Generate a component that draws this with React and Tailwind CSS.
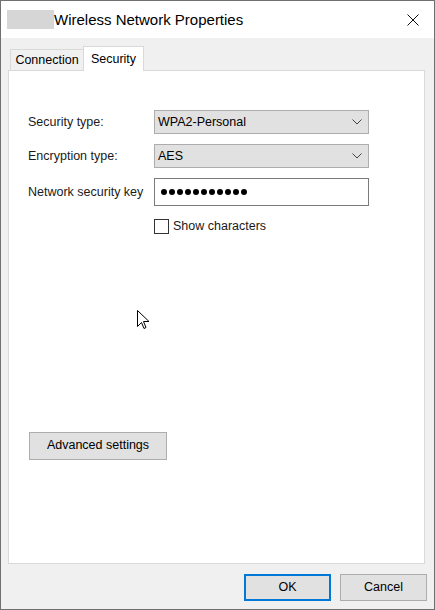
import React from 'react'

const font = { fontFamily: '"Segoe UI", "Liberation Sans", Arial, sans-serif' }

function Chevron() {
  return (
    <svg width="10" height="6" viewBox="0 0 10 6" className="mr-[6px]">
      <path d="M0.5 0.5 L5 5 L9.5 0.5" fill="none" stroke="#444" strokeWidth="1" />
    </svg>
  )
}

function Select({ value }) {
  return (
    <div className="w-[215px] h-[24px] bg-[#e1e1e1] border border-[#adadad] flex items-center justify-between pl-[3px]">
      <span className="text-[12.5px] text-black leading-none">{value}</span>
      <Chevron />
    </div>
  )
}

function Row({ label, children, className }) {
  return (
    <div className={'flex items-center ' + (className || '')}>
      <span className="w-[126px] text-[12.5px] text-[#1a1a1a]">{label}</span>
      {children}
    </div>
  )
}

function Button({ children, primary, className }) {
  return (
    <div
      className={
        'flex items-center justify-center bg-[#e1e1e1] text-[12.5px] text-black ' +
        (primary ? 'border-2 border-[#0078d7] ' : 'border border-[#adadad] ') +
        (className || '')
      }
    >
      {children}
    </div>
  )
}

export default function App() {
  return (
    <div className="relative w-[435px] h-[610px] border border-[#707070] flex flex-col bg-[#f0f0f0]" style={font}>
      {/* Title bar */}
      <div className="h-[37px] bg-white flex items-center shrink-0">
        <div className="ml-[6px] w-[47px] h-[19px] bg-[#d6d6d6]" />
        <span className="text-[15px] text-black leading-none">Wireless Network Properties</span>
        <svg className="ml-auto mr-[15px]" width="12" height="12" viewBox="0 0 12 12">
          <path d="M0.5 0.5 L11.5 11.5 M11.5 0.5 L0.5 11.5" stroke="#111" strokeWidth="1" />
        </svg>
      </div>

      {/* Tabs */}
      <div className="flex items-end pl-[9px] pt-[8px] relative z-10 h-[32px]">
        <div className="h-[22px] w-[73px] border border-[#d9d9d9] border-r-0 bg-[#f0f0f0] flex justify-center items-center text-[12.5px] text-black mb-[-1px]">
          Connection
        </div>
        <div className="h-[25px] w-[61px] border border-[#d9d9d9] border-b-0 bg-white flex justify-center items-start pt-[3px] text-[12.5px] text-black mb-[-1px]">
          Security
        </div>
      </div>

      {/* Panel */}
      <div className="ml-[7px] w-[417px] h-[494px] bg-white border border-[#d9d9d9] flex flex-col pl-[19px] pt-[39px]">
        <Row label="Security type:">
          <Select value="WPA2-Personal" />
        </Row>
        <Row label="Encryption type:" className="mt-[10px]">
          <Select value="AES" />
        </Row>
        <Row label="Network security key" className="mt-[10px]">
          <div className="w-[215px] h-[28px] bg-white border border-[#7a7a7a] flex items-center gap-[2px] pl-[6px]">
            {Array.from({ length: 11 }).map((_, i) => (
              <span key={i} className="w-[6px] h-[6px] rounded-full bg-black" />
            ))}
          </div>
        </Row>
        <div className="flex items-center ml-[126px] mt-[11px]">
          <div className="w-[15px] h-[15px] border border-[#333] bg-white" />
          <span className="ml-[4px] text-[12.5px] text-[#1a1a1a]">Show characters</span>
        </div>

        <Button className="w-[138px] h-[28px] mt-[196px] ml-[1px]">Advanced settings</Button>
      </div>

      {/* Bottom buttons */}
      <div className="flex justify-end gap-[9px] pr-[7px] mt-[10px]">
        <Button primary className="w-[87px] h-[27px]">OK</Button>
        <Button className="w-[87px] h-[27px]">Cancel</Button>
      </div>

      {/* Mouse cursor */}
      <svg className="absolute left-[136px] top-[309px]" width="13" height="21" viewBox="0 0 13 21">
        <path d="M0.5 0.5 L0.5 16.5 L4.5 12.5 L7 18.5 L9 17.5 L6.5 11.5 L12 11.5 Z" fill="white" stroke="black" strokeWidth="1" strokeLinejoin="miter" />
      </svg>
    </div>
  )
}
